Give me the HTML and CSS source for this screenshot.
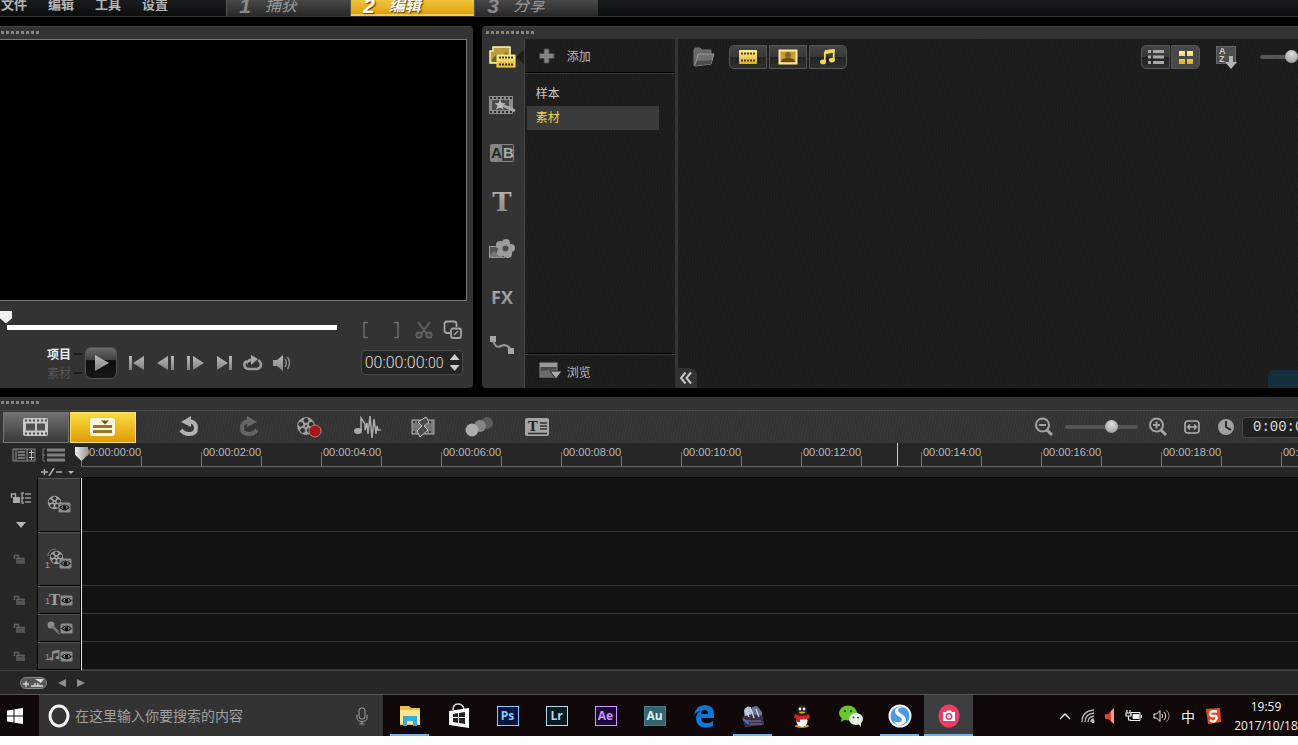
FILE: index.html
```
<!DOCTYPE html>
<html lang="zh-CN">
<head>
    <meta charset="UTF-8">
    <meta name="viewport" content="width=device-width, initial-scale=1.0">
    <title>视频编辑</title>
    <link rel="stylesheet" href="styles.css">
</head>
<body>

<!-- shared icons -->
<svg class="defs" width="0" height="0">
    <defs>
        <linearGradient id="silver" x1="0" y1="0" x2="0" y2="1">
            <stop offset="0" stop-color="#b8b8b8"/>
            <stop offset="1" stop-color="#838383"/>
        </linearGradient>
        <linearGradient id="gold" x1="0" y1="0" x2="0" y2="1">
            <stop offset="0" stop-color="#fff3a0"/>
            <stop offset="1" stop-color="#dcae20"/>
        </linearGradient>
        <symbol id="lock" viewBox="0 0 12 12">
            <path d="M1.500 6V2.500h4V5M4 5.500h7V10H4z" fill="none" stroke="#606060" stroke-width="1.500"/>
            <path d="M5 6.500h5v3H5z" fill="#555"/>
        </symbol>
        <symbol id="eye" viewBox="0 0 13 11">
            <rect x="0.500" y="0.500" width="12" height="10" rx="1.500" fill="#8d8d8d"/>
            <path d="M2 5.500Q6.500 0.500 11 5.500Q6.500 10 2 5.500z" fill="#999" stroke="#1c1c1c" stroke-width="1.200"/>
            <circle cx="6.500" cy="5.500" r="1.800" fill="#111"/>
            <path d="M3 2.500l1 1M10 2.500l-1 1" stroke="#1c1c1c"/>
        </symbol>
        <symbol id="reel" viewBox="0 0 18 18">
            <circle cx="9" cy="9" r="8" fill="#a0a0a0"/>
            <g fill="#303030">
                <circle cx="9" cy="4" r="2.200"/>
                <circle cx="4.300" cy="7.500" r="2.200"/>
                <circle cx="13.700" cy="7.500" r="2.200"/>
                <circle cx="6" cy="13" r="2.200"/>
                <circle cx="12" cy="13" r="2.200"/>
                <circle cx="9" cy="9" r="1"/>
            </g>
        </symbol>
        <symbol id="notes" viewBox="0 0 18 18">
            <path d="M6 2.500L16 1v11" fill="none" stroke="currentColor" stroke-width="2"/>
            <path d="M6 2L17 0v4L6 6z" fill="currentColor"/>
            <path d="M6 3v11" stroke="currentColor" stroke-width="2"/>
            <ellipse cx="4" cy="14.500" rx="3.400" ry="2.700" fill="currentColor"/>
            <ellipse cx="14" cy="12.500" rx="3.400" ry="2.700" fill="currentColor"/>
        </symbol>
    </defs>
</svg>

<div class="app">
    <header class="topbar">
        <nav class="menu">
            <a href="#">文件</a>
            <a href="#">编辑</a>
            <a href="#">工具</a>
            <a href="#">设置</a>
        </nav>
        <nav class="steps">
            <button type="button" class="step"><b>1</b><span>捕获</span></button>
            <button type="button" class="step active"><b>2</b><span>编辑</span></button>
            <button type="button" class="step"><b>3</b><span>分享</span></button>
        </nav>
    </header>

    <main class="workspace">
        <section class="panel player">
            <div class="grip"></div>
            <div class="screen"></div>
            <div class="player-controls">
                <div class="player-left">
                    <input type="range" class="seek" min="0" max="100" value="0" aria-label="播放位置">
                    <div class="transport">
                        <div class="mode">
                            <button type="button" class="mode-btn on">项目</button>
                            <button type="button" class="mode-btn">素材</button>
                        </div>
                        <button type="button" class="play" aria-label="播放">
                            <svg width="32" height="32" viewBox="0 0 32 32"><path d="M10 8l14 8-14 8z" fill="url(#silver)"/></svg>
                        </button>
                        <button type="button" class="tbtn" aria-label="起始">
                            <svg width="18" height="16" viewBox="0 0 18 16" fill="url(#silver)"><path d="M1 1h3v14H1zM16 1v14L5 8z"/></svg>
                        </button>
                        <button type="button" class="tbtn" aria-label="上一帧">
                            <svg width="18" height="16" viewBox="0 0 18 16" fill="url(#silver)"><path d="M11 1v14L0 8zM14 1h3v14h-3z"/></svg>
                        </button>
                        <button type="button" class="tbtn" aria-label="下一帧">
                            <svg width="18" height="16" viewBox="0 0 18 16" fill="url(#silver)"><path d="M1 1h3v14H1zM7 1v14l11-7z"/></svg>
                        </button>
                        <button type="button" class="tbtn" aria-label="结束">
                            <svg width="18" height="16" viewBox="0 0 18 16" fill="url(#silver)"><path d="M2 1v14l11-7zM14 1h3v14h-3z"/></svg>
                        </button>
                        <button type="button" class="tbtn" aria-label="重复">
                            <svg width="20" height="16" viewBox="0 0 20 16"><path d="M4 6Q0 8 2 12Q3 14 6 14h8Q18 13 18 10Q18 7 15 5" fill="none" stroke="#9c9c9c" stroke-width="2.600"/><path d="M8 0l7 4-7 6V6.500Q5 6.500 4 10Q3 4 8 3.500z" fill="#a8a8a8"/></svg>
                        </button>
                        <button type="button" class="tbtn" aria-label="音量">
                            <svg width="20" height="16" viewBox="0 0 20 16"><path d="M1 5h4l6-5v16l-6-5H1z" fill="url(#silver)"/><path d="M13 4q2.500 4 0 8M15.500 2q4 6 0 12" fill="none" stroke="#909090" stroke-width="1.400"/></svg>
                        </button>
                    </div>
                </div>
                <div class="player-right">
                    <div class="marks">
                        <button type="button" aria-label="开始标记"><svg width="10" height="18" viewBox="0 0 10 18"><path d="M7 1.500H3v15h4" fill="none" stroke="#6c6c6c" stroke-width="1.500"/></svg></button>
                        <button type="button" aria-label="结束标记"><svg width="10" height="18" viewBox="0 0 10 18"><path d="M3 1.500h4v15H3" fill="none" stroke="#6c6c6c" stroke-width="1.500"/></svg></button>
                        <button type="button" aria-label="剪辑"><svg width="18" height="18" viewBox="0 0 18 18" fill="none" stroke="#606060" stroke-width="2"><path d="M3 1l9 12M15 1L6 13"/><circle cx="4" cy="14" r="2.500"/><circle cx="14" cy="14" r="2.500"/></svg></button>
                        <button type="button" aria-label="扩大预览"><svg width="20" height="20" viewBox="0 0 20 20" fill="none" stroke="#a4a4a4" stroke-width="1.800"><path d="M7 13H4q-2.500 0-2.500-2.500V4Q1.500 1.500 4 1.500h7Q13.500 1.500 13.500 4v3"/><rect x="8" y="8.500" width="10" height="9.500" rx="2"/><path d="M11 15l4-4" stroke-width="1.500"/></svg></button>
                    </div>
                    <div class="timecode">
                        <output>00:00:00:<small>00</small></output>
                        <span class="spin">
                            <button type="button" class="up" aria-label="增加"></button>
                            <button type="button" class="down" aria-label="减少"></button>
                        </span>
                    </div>
                </div>
            </div>
        </section>

        <section class="panel library">
            <div class="grip"></div>
            <div class="library-body">
                <nav class="side">
                    <button type="button" class="side-btn current" aria-label="媒体">
                        <svg width="28" height="24" viewBox="0 0 28 24">
                            <path d="M5 2h17v16H2V6h3z" fill="#b99c3c" stroke="#fff5ae" stroke-width="1.500"/>
                            <path d="M4 14l5-5 5 3 4-5 3 3v7H4z" fill="#75662f"/>
                            <rect x="9" y="10" width="18" height="12" fill="url(#gold)" stroke="#ffe567"/>
                            <path d="M11 12.500h15M11 19.500h15" stroke="#453600" stroke-width="2" stroke-dasharray="2 1"/>
                        </svg>
                    </button>
                    <button type="button" class="side-btn" aria-label="即时项目">
                        <svg width="28" height="20" viewBox="0 0 28 20">
                            <rect x="1" y="1" width="24" height="18" fill="#8d8d8d"/>
                            <path d="M2 3h22M2 17h22" stroke="#2b2b2b" stroke-width="2" stroke-dasharray="2 2"/>
                            <rect x="4" y="5" width="17" height="10" fill="#4c4c4c"/>
                            <path d="M12 4l1.500 4 4 .2-3 2.500 1 4-3.500-2-4 2 1.500-4-3-2.500 4-.2z" fill="#bbb"/>
                            <path d="M14 10l13 6" stroke="#aaa" stroke-width="3"/>
                        </svg>
                    </button>
                    <button type="button" class="side-btn" aria-label="转场">
                        <svg width="26" height="20" viewBox="0 0 26 20">
                            <rect x="1" y="1" width="24" height="18" rx="2" fill="#858585"/>
                            <path d="M13 2h11v16H13z" fill="#3b3b3b"/>
                            <text x="2" y="15" class="ab" fill="#252525">A</text>
                            <text x="14" y="15" class="ab" fill="#aaa">B</text>
                        </svg>
                    </button>
                    <button type="button" class="side-btn" aria-label="标题">
                        <svg width="26" height="22" viewBox="0 0 26 22"><text x="13" y="21" class="big-t" fill="url(#silver)">T</text></svg>
                    </button>
                    <button type="button" class="side-btn" aria-label="图形">
                        <svg width="28" height="22" viewBox="0 0 28 22">
                            <rect x="1.500" y="8.500" width="15" height="11" fill="#555" stroke="#999"/>
                            <path d="M2 17l4-4 9 6H2z" fill="#777"/>
                            <g fill="#9c9c9c">
                                <circle cx="18" cy="5" r="4"/><circle cx="23" cy="10" r="4"/><circle cx="20" cy="16" r="4"/><circle cx="13" cy="14.500" r="4"/><circle cx="12" cy="7" r="4"/><circle cx="17" cy="10" r="5"/>
                            </g>
                            <circle cx="17.500" cy="10.500" r="3" fill="#4c4c4c"/>
                        </svg>
                    </button>
                    <button type="button" class="side-btn" aria-label="滤镜">
                        <svg width="26" height="20" viewBox="0 0 26 20"><text x="13" y="17" class="fx" fill="url(#silver)">FX</text></svg>
                    </button>
                    <button type="button" class="side-btn" aria-label="路径">
                        <svg width="26" height="20" viewBox="0 0 26 20"><path d="M4 5q2 9 8 6t10 4" fill="none" stroke="#999" stroke-width="2"/><path d="M1 1h6v6H1zM19 13h6v6h-6z" fill="#a5a5a5"/></svg>
                    </button>
                </nav>

                <div class="folders">
                    <button type="button" class="folder-action add">
                        <svg width="22" height="16" viewBox="0 0 22 16"><path d="M5 1h5v4.500H15v5h-5V15H5v-4.500H.5v-5H5z" fill="#858585" stroke="#444"/></svg>
                        <span>添加</span>
                    </button>
                    <ul>
                        <li><a href="#">样本</a></li>
                        <li class="selected"><a href="#">素材</a></li>
                    </ul>
                    <button type="button" class="folder-action browse">
                        <svg width="24" height="18" viewBox="0 0 24 18"><rect x="1" y="1" width="17" height="14" fill="#484848" stroke="#8d8d8d"/><path d="M1 1h17v4H1z" fill="#999"/><path d="M2 14V9l16-2v7z" fill="#6a6a6a"/><path d="M11 9h12l-6 8z" fill="#aaa" stroke="#222"/></svg>
                        <span>浏览</span>
                    </button>
                </div>

                <div class="gallery">
                    <div class="gallery-bar">
                        <button type="button" class="plain" aria-label="打开文件夹">
                            <svg width="22" height="20" viewBox="0 0 22 20"><path d="M1 19V3q0-2 2-2h4l2 2h9v4" fill="#666" stroke="#777"/><path d="M2 19L5 7h16l-3 10z" fill="#707070" stroke="#999"/><path d="M2 19l16-2 1-4L4 14z" fill="#4d4d4d"/></svg>
                        </button>
                        <div class="btn-group filters">
                            <button type="button" aria-label="视频"><svg width="20" height="16" viewBox="0 0 20 16"><rect x="1" y="1" width="18" height="14" rx="1" fill="url(#gold)"/><path d="M3 4.500h15M3 11.500h15" stroke="#5b3f00" stroke-width="2" stroke-dasharray="2 1"/></svg></button>
                            <button type="button" aria-label="照片"><svg width="20" height="16" viewBox="0 0 20 16"><rect x="1.500" y="1.500" width="17" height="13" fill="#c89c35" stroke="#ffeaa0" stroke-width="2"/><path d="M3 13q0-4 7-4t7 4z" fill="#774400"/><circle cx="10" cy="6" r="3" fill="#806628"/></svg></button>
                            <button type="button" class="note" aria-label="音频"><svg width="17" height="16"><use href="#notes"/></svg></button>
                        </div>
                        <div class="btn-group views">
                            <button type="button" aria-label="列表视图"><svg width="18" height="16" viewBox="0 0 18 16" stroke="#a9a9a9" stroke-width="3"><path d="M1 2.500h3M6 2.500h11M1 8h3M6 8h11M1 13.500h3M6 13.500h11"/></svg></button>
                            <button type="button" class="lit" aria-label="缩略图视图"><svg width="16" height="16" viewBox="0 0 16 16" fill="url(#gold)"><path d="M1 2h6v5H1zM9 2h6v5H9zM1 10h6v5H1zM9 10h6v5H9z"/></svg></button>
                        </div>
                        <button type="button" class="plain sort" aria-label="排序">
                            <svg width="24" height="24" viewBox="0 0 24 24"><rect x="1.500" y="1.500" width="19" height="17" fill="#4d4d4d" stroke="#666"/><text x="4" y="9" class="az">A</text><text x="4" y="17" class="az">Z</text><path d="M14 11h4v6h4l-6 7-6-7h4z" fill="#b4b4b4"/></svg>
                        </button>
                        <input type="range" class="knob size" min="0" max="10" value="10" aria-label="缩略图大小">
                    </div>
                    <button type="button" class="collapse" aria-label="折叠">
                        <svg width="14" height="14" viewBox="0 0 14 14"><path d="M6.500 1.500L2 7l4.500 5.500M12 1.500L7.500 7l4.500 5.500" fill="none" stroke="#c8c8c8" stroke-width="2"/></svg>
                    </button>
                    <span class="options-tab"></span>
                </div>
            </div>
        </section>
    </main>

    <section class="timeline">
        <div class="grip"></div>
        <div class="toolbar">
            <div class="view-switch">
                <button type="button" aria-label="故事板视图">
                    <svg width="26" height="18" viewBox="0 0 26 18"><rect x="0" y="0" width="25" height="18" rx="2" fill="#c8c8c8"/><path d="M2 2.500h22M2 15.500h22" stroke="#4b4b4b" stroke-width="2" stroke-dasharray="2 2"/><path d="M3 5.500h9v7H3zM14 5.500h8v7h-8z" fill="#505050"/></svg>
                </button>
                <button type="button" class="active" aria-label="时间轴视图">
                    <svg width="26" height="18" viewBox="0 0 26 18"><rect x="0" y="0" width="25" height="18" rx="3" fill="#fff6dd"/><path d="M3 8.500h19M3 13.500h19" stroke="#94762a" stroke-width="3"/><path d="M11 2.500h8l-4 4z" fill="#6e5417"/></svg>
                </button>
            </div>
            <div class="tools">
                <button type="button" class="tool wide" aria-label="撤消"><svg width="22" height="22" viewBox="0 0 22 22"><path d="M3 6L13 0v11z" fill="#b2b2b2"/><path d="M11 5q7 1 7 7t-7 6q-5 0-8-4" fill="none" stroke="#b2b2b2" stroke-width="4"/></svg></button>
                <button type="button" class="tool wide" aria-label="重复"><svg width="22" height="22" viewBox="0 0 22 22"><path d="M19 6L9 0v11z" fill="#666"/><path d="M11 5q-7 1-7 7t7 6q5 0 8-4" fill="none" stroke="#666" stroke-width="4"/></svg></button>
                <button type="button" class="tool wide" aria-label="录制"><svg width="26" height="22" viewBox="0 0 26 22"><use href="#reel" x="0" y="0" width="20" height="20"/><circle cx="19" cy="15" r="6" fill="#a01818" stroke="#d07a70"/></svg></button>
                <button type="button" class="tool" aria-label="混音器"><svg width="28" height="22" viewBox="0 0 28 22"><ellipse cx="5" cy="15" rx="4" ry="3" fill="#aaa"/><path d="M8 15V2l4 6v6l2-7 1 11 2-18 2 22 2-19 2 15 1-8 1 4h3" fill="none" stroke="#aaa" stroke-width="1.500"/></svg></button>
                <button type="button" class="tool" aria-label="即时项目"><svg width="26" height="22" viewBox="0 0 26 22"><rect x="2" y="4" width="22" height="14" fill="#777" stroke="#aaa"/><path d="M3 6h20M3 16h20" stroke="#222" stroke-width="1.500" stroke-dasharray="2 2"/><path d="M16 1L8 6l4 4-5 5 3 6 8-7-4-4 5-4z" fill="#4b4b4b" stroke="#c4c4c4"/></svg></button>
                <button type="button" class="tool" aria-label="运动追踪"><svg width="30" height="22" viewBox="0 0 30 22"><circle cx="23" cy="7" r="6" fill="#5b5b5b"/><circle cx="16" cy="10" r="6" fill="#858585"/><circle cx="8" cy="14" r="6.500" fill="#adadad"/></svg></button>
                <button type="button" class="tool wide" aria-label="字幕编辑器"><svg width="26" height="18" viewBox="0 0 26 18"><rect x="1" y="0" width="24" height="18" rx="2" fill="#a5a5a5"/><text x="4" y="13" class="sub-t">T</text><path d="M16 5h7M16 8h7M16 11h7M4 15.500h19" stroke="#333" stroke-width="1.500"/></svg></button>
            </div>
            <div class="zoom">
                <button type="button" aria-label="缩小"><svg width="20" height="20" viewBox="0 0 20 20" fill="none" stroke="#a4a4a4" stroke-width="2"><circle cx="8.500" cy="8" r="6.500"/><path d="M5 8h7"/><path d="M13 13l5 5" stroke-width="3"/></svg></button>
                <input type="range" class="knob zoom-range" min="0" max="100" value="67" aria-label="缩放">
                <button type="button" aria-label="放大"><svg width="20" height="20" viewBox="0 0 20 20" fill="none" stroke="#a4a4a4" stroke-width="2"><circle cx="8.500" cy="8" r="6.500"/><path d="M5 8h7M8.500 4.500v7"/><path d="M13 13l5 5" stroke-width="3"/></svg></button>
                <button type="button" aria-label="适合窗口"><svg width="16" height="14" viewBox="0 0 16 14" fill="none" stroke="#b0b0b0"><rect x="1" y="1" width="14" height="12" rx="3" stroke-width="1.600"/><path d="M3.500 7h9M6 4.500L3.500 7 6 9.500M10 4.500L12.500 7 10 9.500" stroke-width="1.300"/></svg></button>
                <svg class="clock-icon" width="16" height="16" viewBox="0 0 16 16"><circle cx="8" cy="8" r="8" fill="#a0a0a0"/><path d="M8 2v6l5 3" fill="none" stroke="#222" stroke-width="1.800"/></svg>
                <output class="duration">0:00:00:00</output>
            </div>
        </div>

        <div class="ruler-row">
            <div class="ruler-tools">
                <button type="button" aria-label="显示全部轨道"><svg width="24" height="14" viewBox="0 0 24 14"><rect x="1" y="1" width="22" height="12" fill="#333" stroke="#888"/><path d="M4 1v12M15 1v12" stroke="#888"/><path d="M6 4h7M6 7h7M6 10h7" stroke="#888" stroke-width="1.500"/><path d="M17 4.500h5M19.500 2v5M17 9.500h5M19.500 7v5" stroke="#bbb"/></svg></button>
                <button type="button" aria-label="轨道管理器"><svg width="24" height="14" viewBox="0 0 24 14"><path d="M5 2h18M5 7h18M5 12h18" stroke="#808080" stroke-width="3"/><path d="M3 1H1v12h2M1 7h2" fill="none" stroke="#777"/></svg></button>
            </div>
            <div class="ruler">
                <span>00:00:00:00</span>
                <span>00:00:02:00</span>
                <span>00:00:04:00</span>
                <span>00:00:06:00</span>
                <span>00:00:08:00</span>
                <span>00:00:10:00</span>
                <span>00:00:12:00</span>
                <span>00:00:14:00</span>
                <span>00:00:16:00</span>
                <span>00:00:18:00</span>
                <span>00:00:20:00</span>
                <i class="cue"></i>
            </div>
            <i class="playhead"></i>
        </div>

        <div class="tracks">
            <div class="add-track"><svg width="34" height="8" viewBox="0 0 34 8"><path d="M0 4h7M3.500 1v6M8 8l5-8M15 4h6" fill="none" stroke="#aaa" stroke-width="1.500"/><path d="M27 3h6l-3 3z" fill="#bbb"/></svg></div>
            <div class="strip"></div>

            <div class="lock main-lock">
                <svg width="22" height="12" viewBox="0 0 22 12"><path d="M1.500 6V2h4v3" fill="none" stroke="#aaa" stroke-width="1.500"/><path d="M3 5h7v6H3z" fill="#aaa"/><path d="M14 1h-2v10h2M12 6h2M15 2h6M15 6h6M15 10h6" fill="none" stroke="#999" stroke-width="1.500"/></svg>
                <svg width="10" height="6" viewBox="0 0 10 6"><path d="M0 0h10L5 6z" fill="#b4b4b4"/></svg>
            </div>
            <div class="head tall"><svg width="24" height="20" viewBox="0 0 24 20"><use href="#reel" width="15" height="15"/><use href="#eye" x="11" y="7" width="13" height="11"/></svg></div>
            <div class="lane tall"></div>

            <div class="lock"><svg width="12" height="12"><use href="#lock"/></svg></div>
            <div class="head tall"><svg width="28" height="24" viewBox="0 0 28 24"><text x="0" y="21" class="num">1</text><path d="M3 9q0-7 8-7" fill="none" stroke="#777"/><use href="#reel" x="4" y="3" width="15" height="15"/><use href="#eye" x="14" y="11" width="13" height="11"/></svg></div>
            <div class="lane tall"></div>

            <div class="lock"><svg width="12" height="12"><use href="#lock"/></svg></div>
            <div class="head"><svg width="28" height="16" viewBox="0 0 28 16"><text x="0" y="12" class="num">1</text><text x="4" y="13" class="track-t">T</text><use href="#eye" x="15" y="3" width="13" height="11"/></svg></div>
            <div class="lane"></div>

            <div class="lock"><svg width="12" height="12"><use href="#lock"/></svg></div>
            <div class="head"><svg width="28" height="16" viewBox="0 0 28 16"><circle cx="6" cy="5" r="3.500" fill="#8d8d8d"/><path d="M7 6l6 6" stroke="#777" stroke-width="2.500"/><path d="M12 12l3 2" stroke="#777"/><use href="#eye" x="15" y="3" width="13" height="11"/></svg></div>
            <div class="lane"></div>

            <div class="lock"><svg width="12" height="12"><use href="#lock"/></svg></div>
            <div class="head"><svg width="28" height="16" viewBox="0 0 28 16"><text x="0" y="12" class="num">1</text><use href="#notes" x="4" y="2" width="11" height="11"/><use href="#eye" x="15" y="3" width="13" height="11"/></svg></div>
            <div class="lane"></div>
        </div>

        <div class="scroll-row">
            <button type="button" class="pill" aria-label="添加章节"><svg width="22" height="8" viewBox="0 0 22 8"><path d="M0 5h6M3 2v6M8 7h12M12 4v3M15 4v3" stroke="#ddd" stroke-width="1.300"/><path d="M12 0h9l-3 4z" fill="#ddd"/></svg></button>
            <button type="button" aria-label="向左滚动"><svg width="8" height="8" viewBox="0 0 8 8"><path d="M8 0v8L0 4z" fill="#8e8e8e"/></svg></button>
            <button type="button" aria-label="向右滚动"><svg width="8" height="8" viewBox="0 0 8 8"><path d="M0 0v8l8-4z" fill="#8e8e8e"/></svg></button>
        </div>
    </section>

    <footer class="taskbar">
        <button type="button" class="start" aria-label="开始"><svg width="16" height="16" viewBox="0 0 16 16" fill="#fff"><path d="M0 2.500L6.500 1.500v6H0zM7.500 1.300L16 0v7.500H7.500zM0 8.500h6.500v6L0 13.500zM7.500 8.500H16V16l-8.500-1.300z"/></svg></button>
        <label class="search">
            <svg width="22" height="24" viewBox="0 0 22 24"><ellipse cx="11" cy="12" rx="9" ry="10" fill="none" stroke="#f4f4f4" stroke-width="3"/></svg>
            <input type="text" placeholder="在这里输入你要搜索的内容" aria-label="搜索">
            <svg width="12" height="18" viewBox="0 0 12 18" fill="none" stroke="#a0a0a0"><rect x="3" y="1" width="6" height="11" rx="2.500"/><path d="M1 8v3q0 3.500 5 3.500t5-3.500V8M6 14.500V17M3.500 17h5"/></svg>
        </label>
        <div class="apps">
            <button type="button" class="running" aria-label="文件资源管理器"><svg width="22" height="22" viewBox="0 0 22 22"><path d="M1 4V1h9l2 2h9v17H1z" fill="#e6bd4f"/><path d="M1 5h20v14H1z" fill="#fbe58d"/><path d="M4 21V11h14v10h-4v-5H8v5z" fill="#37a9dc"/></svg></button>
            <button type="button" aria-label="应用商店"><svg width="22" height="26" viewBox="0 0 22 26"><path d="M1 8l20-3v20L1 22z" fill="#fff"/><path d="M5 7q0-6 5-6t6 5" fill="none" stroke="#ddd" stroke-width="1.500"/><path d="M5 11l5-1v4H5zM11 10l6-1v5h-6zM5 15h5v5l-5-1zM11 15h6v6l-6-1z" fill="#222"/></svg></button>
            <button type="button"><span class="adobe ps">Ps</span></button>
            <button type="button"><span class="adobe lr">Lr</span></button>
            <button type="button"><span class="adobe ae">Ae</span></button>
            <button type="button"><span class="adobe au">Au</span></button>
            <button type="button" aria-label="Edge"><svg width="22" height="24" viewBox="0 0 22 24"><path d="M1 11Q3 1 12 1q9 0 9 10v3H8q0 5 6 5 4 0 6-2v5q-3 1.500-7 1.500-10 0-10-9 0-5 5-8Q3 8 1 11zm7-1h7q0-4-3.500-4T8 10z" fill="#0a78d6"/></svg></button>
            <button type="button" class="running" aria-label="会声会影"><svg width="24" height="24" viewBox="0 0 24 24"><path d="M3 6q3-5 7-3l2 9-8 3z" fill="#b6c2d4"/><path d="M11 3l5-1 5 6v9H10z" fill="#69758e"/><path d="M1 13l10-3 11 2 1 9-19 2z" fill="#39324b"/><path d="M5 5l3 8M10 5l3 9M15 5l3 8" stroke="#cfd6e4" stroke-width="1.300"/><path d="M5 17h15M9 20h12" stroke="#7c7895"/><path d="M2 15l6 5" stroke="#586ac0" stroke-width="2"/></svg></button>
            <button type="button" aria-label="QQ"><svg width="20" height="24" viewBox="0 0 20 24"><ellipse cx="10" cy="22" rx="7" ry="1.800" fill="#e7a500"/><ellipse cx="10" cy="16" rx="7" ry="7" fill="#1a1a1a"/><ellipse cx="10" cy="17" rx="5.500" ry="6" fill="#fff"/><ellipse cx="10" cy="7" rx="5" ry="6" fill="#222"/><circle cx="8" cy="5" r="1.400" fill="#fff"/><circle cx="12" cy="5" r="1.400" fill="#fff"/><ellipse cx="10" cy="8.500" rx="3" ry="1" fill="#f1b000"/><path d="M3 10q7 4 14 0l1 4q-8 3-16 0z" fill="#e01f1f"/><path d="M5 13h3v5H5z" fill="#e01f1f"/></svg></button>
            <button type="button" aria-label="微信"><svg width="24" height="22" viewBox="0 0 24 22"><ellipse cx="9" cy="8" rx="9" ry="7.500" fill="#69c62d"/><path d="M3 12l-1 5 5-3z" fill="#69c62d"/><circle cx="6" cy="6" r="1.200" fill="#245c0c"/><circle cx="12" cy="6" r="1.200" fill="#245c0c"/><ellipse cx="17" cy="14" rx="7" ry="6" fill="#e8f0e4"/><path d="M19 18l3 4v-5z" fill="#e8f0e4"/><circle cx="14.500" cy="12.500" r="1" fill="#555"/><circle cx="19" cy="12.500" r="1" fill="#555"/></svg></button>
            <button type="button" class="running" aria-label="搜狗浏览器"><svg width="24" height="24" viewBox="0 0 24 24"><circle cx="12" cy="12" r="11.500" fill="#eff7ff"/><circle cx="12" cy="12" r="9.500" fill="#4b98e8"/><path d="M17 4q-8-3-10 2-1 4 5 7 4 3 0 5-3 1-6-1 2 5 7 4 6-2 5-6-1-3-6-6-4-3 0-5 2-1 5 0z" fill="#fff"/></svg></button>
            <button type="button" class="running focused" aria-label="录屏"><svg width="22" height="24" viewBox="0 0 22 24"><ellipse cx="11" cy="12" rx="10.500" ry="11.500" fill="#ee3c68"/><path d="M5 8h3l1-1.500h4L14 8h3v9H5z" fill="#fff"/><circle cx="11" cy="12.500" r="2.700" fill="#fff" stroke="#ee3c68" stroke-width="1.500"/></svg></button>
        </div>
        <div class="tray">
            <svg width="12" height="8" viewBox="0 0 12 8"><path d="M1 7l5-5 5 5" fill="none" stroke="#eee" stroke-width="1.400"/></svg>
            <svg width="14" height="14" viewBox="0 0 14 14" fill="none" stroke="#bbb" stroke-width="1.300"><path d="M1 13Q1 2 13 1M4 13q0-8 9-9M7 13q0-5 6-6M10 13q0-3 3-3"/><circle cx="12" cy="12.500" r="1" fill="#fff"/></svg>
            <svg width="10" height="16" viewBox="0 0 10 16"><path d="M0 6h3l6-6v16l-6-5H0z" fill="#d4442e"/><path d="M6 3l3-3v16l-3-3z" fill="#e8a193"/></svg>
            <svg width="18" height="14" viewBox="0 0 18 14" fill="none" stroke="#eee"><path d="M2 1v3M5 1v3M1 4h5v3H1zM3.500 7v4H6" stroke-width="1.200"/><path d="M6 3.500h9v8H5"/><path d="M8 5.500h6v4H8z" fill="#eee"/><path d="M16.500 6v3"/></svg>
            <svg width="18" height="14" viewBox="0 0 18 14" fill="none" stroke="#eee"><path d="M1 5h2.500L7 1.500v11L3.500 9H1z"/><path d="M9 5q1.500 2 0 4M11 3q3.500 4 0 8"/><path d="M13.500 1q5 6 0 12" stroke="#888"/></svg>
            <span class="ime">中</span>
            <svg width="16" height="18" viewBox="0 0 16 18"><path d="M1 2l14-1 1 14-13 2z" fill="#e8481c"/><path d="M12 4.500Q5 3.500 5 6.500T9 9t2 3.500-6 .5" fill="none" stroke="#fff" stroke-width="2.400"/></svg>
        </div>
        <div class="datetime"><time>19:59</time><time>2017/10/18</time></div>
    </footer>
</div>

</body>
</html>
```
FILE: styles.css
```
* {
    box-sizing: border-box;
}

body {
    margin: 0;
    background-color: #fdfdfd;
    color: #c6c6c6;
    font-family: "Liberation Sans", "Noto Sans CJK SC", sans-serif;
    font-size: 12px;
    overflow: hidden;
}

button {
    display: flex;
    align-items: center;
    justify-content: center;
    margin: 0;
    padding: 0;
    border: none;
    background: none;
    color: inherit;
    font: inherit;
    cursor: pointer;
}

a {
    color: inherit;
    text-decoration: none;
}

svg {
    display: block;
    flex: none;
}

.defs {
    position: absolute;
}

.app {
    background-color: #000;
    overflow: hidden;
}

/* ---------- top bar ---------- */

.topbar {
    display: flex;
    align-items: flex-end;
    height: 17px;
    background: linear-gradient(#1a1d1d, #0c0e0e);
    border-bottom: 1px solid #353535;
    overflow: hidden;
}

.menu {
    display: flex;
    gap: 21px;
    width: 226px;
    padding-left: 1px;
    font-size: 13px;
    font-weight: bold;
    line-height: 22px;
    color: #b5b5b5;
}

.steps {
    display: flex;
}

.step {
    justify-content: flex-start;
    gap: 14px;
    width: 124px;
    height: 20px;
    padding-left: 12px;
    border-left: 1px solid #555;
    background: linear-gradient(#505050, #282828);
    color: #999;
    font-size: 16px;
    font-style: italic;
    line-height: 20px;
}

.step b {
    width: 12px;
    font-size: 21px;
    color: #8a8a8a;
}

.step.active {
    background: linear-gradient(#f5d14a, #dc9a08);
    box-shadow: inset 0 -2px #f3c94f;
    color: #fff;
    font-weight: bold;
    text-shadow: 1px 1px 1px #5c3c00;
}

.step.active b {
    color: #fff;
}

/* ---------- panels ---------- */

.workspace {
    display: grid;
    grid-template-columns: minmax(0, 11fr) minmax(0, 19fr);
    gap: 9px;
    padding: 9px 0;
}

.panel {
    background-color: #333;
    border-top: 1px solid #444;
}

.player {
    border-radius: 0 4px 4px 0;
}

.library {
    display: flex;
    flex-direction: column;
    border-radius: 4px 0 0 4px;
}

.grip {
    height: 12px;
    padding: 4px 0 0 1px;
}

.library .grip {
    padding-left: 4px;
}

.grip::before {
    content: "";
    display: block;
    width: 40px;
    height: 3px;
    background: repeating-linear-gradient(to right, #858585 0 3px, transparent 3px 5px);
}

.library .grip::before {
    width: 48px;
}

.screen {
    height: 262px;
    margin-right: 6px;
    background-color: #000;
    border: solid #777;
    border-width: 1px 1px 1px 0;
}

.player-controls {
    display: flex;
    justify-content: space-between;
    height: 87px;
    padding: 8px 10px 0 0;
}

.player-left {
    width: 337px;
}

.seek {
    display: block;
    appearance: none;
    width: 100%;
    height: 22px;
    margin: 0;
    background: none;
}

.seek::-webkit-slider-runnable-track {
    height: 5px;
    margin-top: 14px;
    background: linear-gradient(to right, transparent 7px, #fff 7px);
}

.seek::-webkit-slider-thumb {
    appearance: none;
    width: 12px;
    height: 13px;
    margin-top: -14px;
    background-color: #f0f0f0;
    clip-path: polygon(0 0, 100% 0, 100% 60%, 50% 100%, 0 60%);
}

.transport {
    display: flex;
    align-items: center;
    margin-top: 13px;
    padding-left: 47px;
}

.mode {
    width: 38px;
}

.mode-btn {
    gap: 3px;
    height: 19px;
    color: #555;
}

.mode-btn::after {
    content: "";
    width: 8px;
    height: 2px;
    background-color: #1c1c1c;
}

.mode-btn.on {
    color: #eee;
    font-weight: bold;
}

.play {
    width: 32px;
    height: 32px;
    margin-right: 5px;
    border: 1px solid #555;
    border-radius: 6px;
    background: linear-gradient(#6b6b6b, #3e3e3e 40%, #0d0d0d 42%, #161616);
}

.tbtn {
    width: 29px;
    height: 30px;
}

.player-right {
    width: 102px;
}

.marks {
    display: grid;
    grid-template-columns: 30px 24px 28px 20px;
    align-items: center;
    justify-items: start;
    height: 24px;
    margin: 9px 0 8px;
}

.timecode {
    display: flex;
    align-items: center;
    justify-content: space-between;
    height: 25px;
    padding: 0 2px 0 3px;
    border: 1px solid #4a4a4a;
    border-radius: 4px;
    background-color: #242424;
    color: #ddd;
    font-family: Roboto, sans-serif;
    font-size: 16px;
    font-weight: 300;
    white-space: nowrap;
}

.timecode small {
    font-size: 14px;
}

.spin {
    display: flex;
    flex-direction: column;
    gap: 5px;
}

.spin button {
    width: 10px;
    height: 6px;
    background-color: #ccc;
}

.spin .up {
    clip-path: polygon(50% 0, 100% 100%, 0 100%);
}

.spin .down {
    clip-path: polygon(0 0, 100% 0, 50% 100%);
}

/* ---------- library ---------- */

.library-body {
    display: flex;
    flex: 1;
}

.side {
    display: flex;
    flex-direction: column;
    gap: 12px;
    width: 43px;
    border-right: 1px solid #444;
}

.side-btn {
    position: relative;
    width: 40px;
    height: 36px;
}

.side-btn.current::after {
    content: "";
    position: absolute;
    right: -2px;
    border: solid transparent;
    border-width: 7px 8px 7px 0;
    border-right-color: #1c1c1c;
}

.ab {
    font: bold 15px "Liberation Sans", sans-serif;
}

.big-t {
    font: bold 26px "DejaVu Serif", serif;
    text-anchor: middle;
}

.fx {
    font: bold 18px "Open Sans", sans-serif;
    text-anchor: middle;
}

.folders,
.gallery {
    background: repeating-linear-gradient(100deg, #1a1a1a 0 1px, #1e1e1e 1px 3px);
}

.folders {
    display: flex;
    flex-direction: column;
    width: 150px;
}

.folder-action {
    justify-content: flex-start;
    gap: 6px;
    height: 34px;
    padding-left: 14px;
    color: #bbb;
}

.folder-action.add {
    border-bottom: 1px solid #000;
    box-shadow: 0 1px #3d3d3d;
}

.folder-action.browse {
    gap: 4px;
    height: 35px;
    margin-top: auto;
    border-top: 1px solid #000;
    box-shadow: inset 0 1px #3d3d3d;
}

.folders ul {
    margin: 0;
    padding: 9px 16px 0 2px;
    list-style: none;
}

.folders li {
    padding-left: 9px;
    line-height: 24px;
}

.folders .selected {
    background-color: #3b3b3b;
    color: #f0d33c;
}

.gallery {
    position: relative;
    flex: 1;
    border-left: 3px solid #333;
}

.gallery-bar {
    display: flex;
    align-items: center;
    height: 36px;
    padding-left: 15px;
}

.btn-group {
    display: flex;
    gap: 2px;
}

.btn-group button {
    width: 38px;
    height: 24px;
    border: 1px solid #555;
    background: linear-gradient(#444, #383838 50%, #222 52%, #303030);
}

.btn-group button:first-child {
    border-radius: 5px 0 0 5px;
}

.btn-group button:last-child {
    border-radius: 0 5px 5px 0;
}

.filters {
    margin-left: 14px;
}

.filters .note {
    color: #f5d95c;
}

.views {
    gap: 1px;
    margin-left: auto;
}

.views button {
    width: 29px;
}

.views .lit {
    background: #484848;
}

.sort {
    margin: 0 21px 0 15px;
}

.az {
    font: bold 9px "Liberation Sans", sans-serif;
    fill: #ccc;
}

.knob {
    appearance: none;
    height: 16px;
    margin: 0;
    background: none;
}

.knob::-webkit-slider-runnable-track {
    height: 4px;
    border-radius: 2px;
    background-color: #555;
}

.knob::-webkit-slider-thumb {
    appearance: none;
    width: 13px;
    height: 13px;
    margin-top: -5px;
    border-radius: 50%;
    background: radial-gradient(circle at 50% 30%, #ddd, #909090);
}

.size {
    width: 38px;
}

.collapse {
    position: absolute;
    left: -2px;
    bottom: 0;
    width: 21px;
    height: 20px;
    border-radius: 0 8px 0 0;
    background-color: #333;
}

.options-tab {
    position: absolute;
    right: 0;
    bottom: 0;
    width: 30px;
    height: 18px;
    border-radius: 6px 0 0 0;
    background-color: #15303c;
}

/* ---------- timeline ---------- */

.timeline {
    background-color: #262626;
    border-bottom: 1px solid #555;
}

.timeline .grip {
    height: 13px;
    background-color: #333;
}

.toolbar {
    display: flex;
    align-items: center;
    height: 33px;
    border-top: 1px solid #484848;
    background: repeating-linear-gradient(100deg, #323232 0 1px, #373737 1px 3px);
}

.view-switch {
    display: flex;
    gap: 1px;
    padding-left: 3px;
}

.view-switch button {
    width: 66px;
    height: 31px;
    background: linear-gradient(#707070, #3a3a3a);
    border: 1px solid #777;
}

.view-switch .active {
    border-color: #ffe269;
    background: linear-gradient(#fadd3f, #e19a09);
}

.tools {
    display: flex;
    margin-left: 23px;
}

.tool {
    width: 56px;
    height: 30px;
}

.tool.wide {
    width: 60px;
}

.sub-t {
    font: bold 13px "DejaVu Serif", serif;
    fill: #222;
}

.zoom {
    display: flex;
    align-items: center;
    margin-left: auto;
}

.zoom button {
    margin-right: 11px;
}

.zoom-range {
    width: 73px;
    margin-right: 10px;
}

.zoom button + button {
    margin: 0 18px 0 6px;
}

.zoom button + .clock-icon {
    margin-right: 8px;
}

.zoom input + button {
    margin-right: 10px;
}

.duration {
    width: 56px;
    height: 21px;
    padding-left: 10px;
    border: solid #484848;
    border-width: 1px 0 1px 1px;
    border-radius: 4px 0 0 4px;
    background-color: #202020;
    color: #ddd;
    font: 14px/19px "Liberation Mono", monospace;
    overflow: hidden;
}

.ruler-row {
    position: relative;
    display: flex;
    height: 24px;
}

.ruler-tools {
    display: flex;
    align-items: center;
    gap: 6px;
    width: 81px;
    padding-left: 12px;
}

.ruler {
    position: relative;
    display: flex;
    flex: 1;
    align-items: flex-end;
    min-width: 0;
    border-bottom: 1px solid #666;
    overflow: hidden;
}

.ruler span {
    position: relative;
    flex: none;
    width: 120px;
    height: 14px;
    padding-left: 1px;
    border-left: 1px solid #777;
    color: #bbb;
    font-size: 11px;
    line-height: 1px;
}

.ruler span::after {
    content: "";
    position: absolute;
    left: 59px;
    bottom: 0;
    width: 1px;
    height: 10px;
    background-color: #777;
}

.playhead {
    position: absolute;
    left: 75px;
    top: 4px;
    width: 13px;
    height: 14px;
    background: linear-gradient(to right, #eee, #999);
    clip-path: polygon(0 0, 100% 0, 100% 55%, 50% 100%, 0 55%);
}

.cue {
    position: absolute;
    left: 816px;
    top: 0;
    width: 1px;
    height: 24px;
    background-color: #ccc;
}

.tracks {
    display: grid;
    grid-template-columns: 37px 44px 1fr;
    color: #8d8d8d;
}

.add-track {
    grid-column: 1 / 3;
    height: 11px;
    padding: 1px 0 0 41px;
}

.strip {
    border-bottom: 1px solid #000;
}

.lock {
    display: flex;
    align-items: center;
    justify-content: center;
}

.main-lock {
    flex-direction: column;
    gap: 18px;
    padding: 10px 0 0 4px;
}

.head {
    display: flex;
    align-items: center;
    justify-content: center;
    height: 28px;
    background-color: #363636;
    border: solid #000;
    border-width: 0 1px 1px;
    box-shadow: inset 0 1px #555;
}

.lane {
    border: solid #dcecff;
    border-width: 0 0 0 1px;
    background-color: #111313;
    box-shadow: inset 0 -1px #303a35;
}

.tall {
    height: 54px;
}

.num {
    font: 9px "Liberation Sans", sans-serif;
    fill: #999;
}

.track-t {
    font: bold 15px "DejaVu Serif", serif;
    fill: #999;
}

.scroll-row {
    display: flex;
    align-items: center;
    gap: 11px;
    height: 24px;
    padding-left: 20px;
    border-top: 1px solid #444;
}

.pill {
    width: 27px;
    height: 12px;
    border: 1px solid #888;
    border-radius: 6px;
    background-color: #555;
}

/* ---------- taskbar ---------- */

.taskbar {
    display: flex;
    height: 41px;
    background-color: #100708;
    color: #f4f4f4;
}

.start {
    width: 39px;
    padding-right: 9px;
}

.search {
    display: flex;
    align-items: center;
    width: 344px;
    padding: 0 15px 0 9px;
    background-color: #333;
}

.search input {
    flex: 1;
    min-width: 0;
    margin: 0;
    padding: 0 5px;
    border: none;
    background: none;
    color: #ddd;
    font: inherit;
    font-size: 14px;
}

.search input::placeholder {
    color: #a0a0a0;
}

.apps {
    display: flex;
    margin-left: 2px;
}

.apps button {
    position: relative;
    width: 49px;
}

.apps .running::after {
    content: "";
    position: absolute;
    left: 5px;
    right: 5px;
    bottom: 0;
    height: 2px;
    background-color: #76aee8;
}

.apps .focused {
    background-color: #3c3e40;
}

.apps .focused::after {
    left: 0;
    right: 0;
}

.adobe {
    width: 22px;
    height: 20px;
    border: 1px solid;
    font: bold 12px/18px "Open Sans", sans-serif;
    text-align: center;
}

.ps {
    background-color: #07143f;
    color: #8bc8ff;
}

.lr {
    background-color: #061a22;
    color: #b4dced;
}

.ae {
    background-color: #1c0838;
    color: #c997ff;
}

.au {
    border-color: #407f87;
    background-color: #33636c;
    color: #d7f6f6;
}

.tray {
    display: flex;
    align-items: center;
    gap: 10px;
    margin-left: auto;
    padding-right: 13px;
}

.ime {
    font-size: 14px;
}

.datetime {
    display: flex;
    flex-direction: column;
    align-items: center;
    width: 64px;
    padding-top: 2px;
    font: 12px/19px "Open Sans", sans-serif;
    white-space: nowrap;
}
```
